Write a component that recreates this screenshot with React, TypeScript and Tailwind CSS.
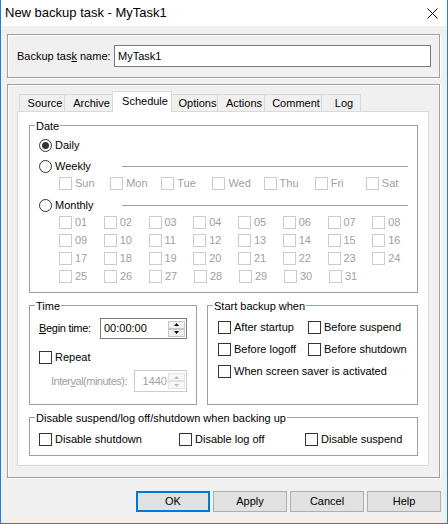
import React from 'react';

const Radio: React.FC<{ checked?: boolean }> = ({ checked }) => (
    <span className="w-[13px] h-[13px] rounded-full border border-[#333333] bg-white flex items-center justify-center shrink-0">
        {checked && <span className="w-[7px] h-[7px] rounded-full bg-[#333333]" />}
    </span>
);

const Check: React.FC<{ disabled?: boolean }> = ({ disabled }) => (
    <span
        className={
            disabled
                ? 'w-[13px] h-[13px] border border-[#cccccc] bg-white shrink-0'
                : 'w-[13px] h-[13px] border border-[#333333] bg-white shrink-0'
        }
    />
);

const Spin: React.FC<{ disabled?: boolean }> = ({ disabled }) => {
    const btn = disabled
        ? 'h-[8px] flex items-center justify-center border border-[#e3e3e3] bg-[#f7f7f7]'
        : 'h-[8px] flex items-center justify-center border border-[#c6c6c6] bg-[#f0f0f0]';
    const fill = disabled ? '#bdbdbd' : '#000000';
    return (
        <div className="flex flex-col w-[17px] h-[16px] shrink-0">
            <div className={btn}>
                <svg width="5" height="3" viewBox="0 0 5 3">
                    <path d="M2.5 0L5 3H0z" fill={fill} />
                </svg>
            </div>
            <div className={btn}>
                <svg width="5" height="3" viewBox="0 0 5 3">
                    <path d="M0 0H5L2.5 3z" fill={fill} />
                </svg>
            </div>
        </div>
    );
};

const Group: React.FC<{ label: string; className: string; children: React.ReactNode }> = ({ label, className, children }) => (
    <div className={`relative border border-[#a0a0a0] ${className}`}>
        <span className="absolute left-[5px] top-[-6px] px-px bg-white leading-[13px] whitespace-nowrap">{label}</span>
        {children}
    </div>
);

const CheckItem: React.FC<{ label: React.ReactNode; className?: string; disabled?: boolean }> = ({ label, className = '', disabled }) => (
    <div className={`flex items-center h-[13px] ${className}`}>
        <Check disabled={disabled} />
        <span className={disabled ? 'ml-[3px] text-[#a0a0a0] whitespace-nowrap' : 'ml-[3px] whitespace-nowrap'}>{label}</span>
    </div>
);

const App: React.FC = () => {
    const days = ['Sun', 'Mon', 'Tue', 'Wed', 'Thu', 'Fri', 'Sat'];
    const dates = Array.from({ length: 31 }, (_, i) => String(i + 1).padStart(2, '0'));
    const dateRows = [dates.slice(0, 8), dates.slice(8, 16), dates.slice(16, 24), dates.slice(24)];

    return (
        <div className="w-[448px] h-[524px] bg-[#f0f0f0] border-x border-b border-[#1883d7] flex flex-col overflow-hidden text-[11px] text-black font-['Liberation_Sans',Arial,sans-serif]">
            {/* Title bar */}
            <div className="h-[26px] shrink-0 bg-white flex items-center justify-between pl-[4px] pr-[9px]">
                <span className="text-[13px]">New backup task - MyTask1</span>
                <svg width="11" height="11" viewBox="0 0 11 11">
                    <path d="M0.5 0.5L10.5 10.5M10.5 0.5L0.5 10.5" stroke="#000" strokeWidth="1" />
                </svg>
            </div>

            {/* Task name */}
            <div className="ml-[6px] mt-[8px] w-[433px] h-[44px] shrink-0 border border-[#a0a0a0] shadow-[inset_1px_1px_0_#fff,1px_1px_0_#fff] pl-[9px] pt-[10px]">
                <div className="flex items-center h-[22px]">
                    <span className="w-[97px]">Backup tas<u>k</u> name:</span>
                    <div className="w-[317px] h-[22px] border border-[#7a7a7a] bg-white flex items-center pl-[3px]">MyTask1</div>
                </div>
            </div>

            {/* Tabs panel */}
            <div className="ml-[6px] mt-[6px] w-[433px] h-[394px] shrink-0 border border-[#a0a0a0] shadow-[inset_1px_1px_0_#fff,1px_1px_0_#fff] pl-[9px] pt-[6px]">
                <div className="relative z-10 flex items-end h-[21px] pl-[2px]">
                    <div className="w-[45px] h-[17px] mb-px border-t border-l border-[#d9d9d9] bg-[#f0f0f0] flex items-center justify-center pl-[6px]">Source</div>
                    <div className="w-[48px] h-[17px] mb-px border-t border-l border-[#d9d9d9] bg-[#f0f0f0] flex items-center justify-center pl-[6px]">Archive</div>
                    <div className="w-[60px] h-[21px] pb-px border-t border-x border-[#d9d9d9] bg-white flex items-center justify-center pl-[6px]">Schedule</div>
                    <div className="w-[45px] h-[17px] mb-px border-t border-[#d9d9d9] bg-[#f0f0f0] flex items-center justify-center pl-[6px]">Options</div>
                    <div className="w-[47px] h-[17px] mb-px border-t border-l border-[#d9d9d9] bg-[#f0f0f0] flex items-center justify-center pl-[6px]">Actions</div>
                    <div className="w-[57px] h-[17px] mb-px border-t border-l border-[#d9d9d9] bg-[#f0f0f0] flex items-center justify-center pl-[6px]">Comment</div>
                    <div className="w-[40px] h-[17px] mb-px border-t border-x border-[#d9d9d9] bg-[#f0f0f0] flex items-center justify-center pl-[6px]">Log</div>
                </div>

                {/* Schedule page */}
                <div className="-mt-px w-[412px] h-[355px] border border-[#d9d9d9] bg-white pl-[11px] pt-[13px]">
                    <Group label="Date" className="w-[389px] h-[168px] pl-[9px] pt-[13px] flex flex-col">
                        <div className="flex items-center h-[13px]">
                            <Radio checked />
                            <span className="ml-[3px]">Daily</span>
                        </div>
                        <div className="flex items-center h-[13px] mt-[8px] pr-[9px]">
                            <Radio />
                            <span className="ml-[3px] w-[67px]">Weekly</span>
                            <span className="flex-1 h-px bg-[#a0a0a0]" />
                        </div>
                        <div className="flex h-[13px] mt-[4px] pl-[20px]">
                            {days.map(d => (
                                <CheckItem key={d} label={d} disabled className="w-[52px]" />
                            ))}
                        </div>
                        <div className="flex items-center h-[13px] mt-[9px] pr-[9px]">
                            <Radio />
                            <span className="ml-[3px] w-[67px]">Monthly</span>
                            <span className="flex-1 h-px bg-[#a0a0a0]" />
                        </div>
                        {dateRows.map((row, i) => (
                            <div key={i} className={i === 0 ? 'flex h-[13px] mt-[4px] pl-[20px]' : 'flex h-[13px] mt-[5px] pl-[20px]'}>
                                {row.map(d => (
                                    <CheckItem key={d} label={d} disabled className="w-[45px]" />
                                ))}
                            </div>
                        ))}
                    </Group>

                    <div className="flex gap-[10px] mt-[12px]">
                        {/* Time */}
                        <Group label="Time" className="w-[168px] h-[100px] pl-[9px] pt-[12px]">
                            <div className="flex items-center h-[21px]">
                                <span className="w-[61px] whitespace-nowrap tracking-[-0.3px]"><u>B</u>egin time:</span>
                                <div className="w-[87px] h-[21px] border border-[#7a7a7a] flex items-center justify-between pl-[3px] pr-px">
                                    <span>00:00:00</span>
                                    <Spin />
                                </div>
                            </div>
                            <CheckItem label="Repeat" className="mt-[12px]" />
                            <div className="flex items-center h-[22px] mt-[6px] pl-[12px]">
                                <span className="w-[83px] text-[#a0a0a0] whitespace-nowrap tracking-[-0.5px]">Inter<u>v</u>al(minutes):</span>
                                <div className="w-[53px] h-[22px] border border-[#cccccc] flex items-center justify-end pr-px">
                                    <span className="text-[#a0a0a0] mr-px">1440</span>
                                    <Spin disabled />
                                </div>
                            </div>
                        </Group>

                        {/* Start backup when */}
                        <Group label="Start backup when" className="w-[211px] h-[100px] pl-[10px] pt-[15px]">
                            <div className="grid grid-cols-[90px_1fr] gap-y-[9px]">
                                <CheckItem label="After startup" />
                                <CheckItem label="Before suspend" />
                                <CheckItem label="Before logoff" />
                                <CheckItem label="Before shutdown" />
                                <CheckItem label="When screen saver is activated" className="col-span-2" />
                            </div>
                        </Group>
                    </div>

                    <Group label="Disable suspend/log off/shutdown when backing up" className="mt-[12px] w-[389px] h-[39px] pl-[9px] pt-[15px] flex">
                        <CheckItem label="Disable shutdown" className="w-[140px]" />
                        <CheckItem label="Disable log off" className="w-[126px]" />
                        <CheckItem label="Disable suspend" />
                    </Group>
                </div>
            </div>

            {/* Buttons */}
            <div className="flex justify-end gap-[3px] pr-[6px] mt-[13px]">
                <button className="w-[74px] h-[21px] border-2 border-[#0078d7] bg-[#e1e1e1]">OK</button>
                <button className="w-[74px] h-[21px] border border-[#adadad] bg-[#e1e1e1]">Apply</button>
                <button className="w-[74px] h-[21px] border border-[#adadad] bg-[#e1e1e1]">Cancel</button>
                <button className="w-[74px] h-[21px] border border-[#adadad] bg-[#e1e1e1]">Help</button>
            </div>
        </div>
    );
};

export default App;
